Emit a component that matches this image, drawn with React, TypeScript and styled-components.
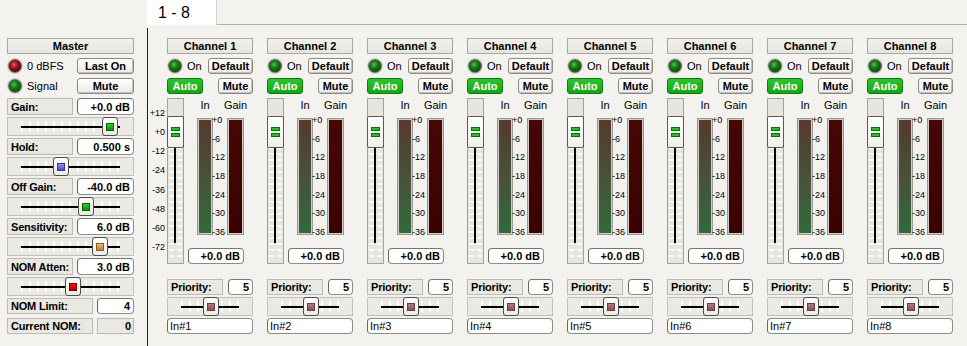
import React from 'react';
import styled, { createGlobalStyle } from 'styled-components';

const Global = createGlobalStyle`
  html, body { margin: 0; padding: 0; background: #f3f2ee; }
  body {
    width: 967px; height: 346px; overflow: hidden;
    font-family: "Liberation Sans", Arial, sans-serif;
    font-size: 11px; color: #000;
  }
  * { box-sizing: border-box; }
`;

const Page = styled.div`
  width: 967px;
  height: 346px;
  display: flex;
  flex-direction: column;
`;

const TabStrip = styled.div`
  display: flex;
  height: 25px;
  flex: none;
`;
const TabSpacer = styled.div`
  width: 147px;
`;
const Tab = styled.div`
  width: 70px;
  background: #fff;
  border-right: 1px solid #d6d4cd;
  font-size: 16px;
  line-height: 25px;
  padding-left: 11px;
`;
const TabRest = styled.div`
  flex: 1;
  border-bottom: 1px solid #b4b2ab;
`;

const Body = styled.div`
  display: flex;
  flex: 1;
`;

const Stack = styled.div<{ $gap: number; $mt?: number }>`
  display: flex;
  flex-direction: column;
  gap: ${p => p.$gap}px;
  margin-top: ${p => p.$mt ?? 0}px;
`;

const MasterPanel = styled(Stack)`
  width: 127px;
  margin: 13px 13px 0 7px;
`;

const HeaderBox = styled.div`
  height: 16px;
  border: 1px solid #aaa79e;
  background: linear-gradient(#f1f0eb, #e6e4de);
  font-weight: bold;
  text-align: center;
  line-height: 14px;
  white-space: nowrap;
`;

const Row = styled.div`
  display: flex;
  align-items: center;
  justify-content: space-between;
  height: 16px;
`;

const ParamRow = styled.div<{ $h?: number }>`
  display: flex;
  justify-content: space-between;
  height: ${p => p.$h ?? 17}px;
`;

const LedGroup = styled.div`
  display: flex;
  align-items: center;
  gap: 5px;
  padding-left: 1px;
  white-space: nowrap;
`;

const Led = styled.div<{ $color: 'green' | 'red' }>`
  width: 14px;
  height: 14px;
  border-radius: 50%;
  border: 1px solid #6f6f6a;
  box-shadow: 0 0 0 1px #cfcdc6;
  background: ${p =>
    p.$color === 'green'
      ? 'radial-gradient(circle at 42% 38%, #4cc24c 0, #157a15 35%, #0b420b 80%)'
      : 'radial-gradient(circle at 42% 38%, #e05a5a 0, #951111 38%, #4c0505 82%)'};
`;

const Button = styled.div<{ $w: number }>`
  width: ${p => p.$w}px;
  height: 16px;
  border: 1px solid #8a8880;
  border-radius: 3px;
  background: linear-gradient(#ffffff, #ebeae5);
  box-shadow: inset -1px -1px 0 #c2c0b8;
  font-weight: bold;
  text-align: center;
  line-height: 14px;
  white-space: nowrap;
`;

const AutoButton = styled.div`
  width: 36px;
  height: 16px;
  border: 1px solid #0e7a0e;
  border-radius: 3px;
  background: linear-gradient(#2cc42c, #16a616);
  color: #fff;
  font-weight: bold;
  text-align: center;
  line-height: 14px;
`;

const LabelBox = styled.div<{ $w: number; $right?: boolean }>`
  width: ${p => p.$w}px;
  height: 100%;
  border: 1px solid #bcb9b0;
  background: #eae8e2;
  font-weight: bold;
  padding: 0 2px 0 3px;
  display: flex;
  align-items: center;
  white-space: nowrap;
  letter-spacing: -0.2px;
  justify-content: ${p => (p.$right ? 'flex-end' : 'flex-start')};
`;

const ValueBox = styled.div<{ $w: number }>`
  width: ${p => p.$w}px;
  height: 100%;
  border: 1px solid #8e8c85;
  border-left-color: #6a6862;
  border-top-color: #77756f;
  border-radius: 4px;
  background: #fff;
  font-weight: bold;
  padding: 0 3px;
  display: flex;
  align-items: center;
  justify-content: flex-end;
  white-space: nowrap;
`;

const NameBox = styled.div`
  height: 16px;
  border: 1px solid #8e8c85;
  border-left-color: #6a6862;
  border-radius: 4px;
  background: #fff;
  padding: 0 2px;
  line-height: 14px;
`;

const SliderBox = styled.div`
  position: relative;
  height: 19px;
  border: 1px solid #c3c0b7;
  background: #ebe9e3;
`;

const SliderTicks = styled.div`
  position: absolute;
  left: 13px;
  right: 13px;
  top: 3px;
  bottom: 3px;
  background: repeating-linear-gradient(90deg, #fbfbf8 0 2px, transparent 2px 8px);
`;

const SliderTrack = styled.div`
  position: absolute;
  left: 13px;
  right: 13px;
  top: 50%;
  height: 2px;
  margin-top: -1px;
  background: #000;
`;

const SliderKnob = styled.div`
  position: absolute;
  top: -1px;
  bottom: -1px;
  width: 16px;
  border: 1px solid #4c4c4a;
  border-radius: 3px;
  background: linear-gradient(#ffffff, #ecebe7);
  display: flex;
  align-items: center;
  justify-content: center;
`;

type DotColor = 'green' | 'blue' | 'tan' | 'red' | 'mauve';
const dotFill: Record<DotColor, [string, string, string]> = {
  green: ['#2ccc2c', '#0a930a', '#086208'],
  blue: ['#9494f4', '#4a4ac4', '#35358c'],
  tan: ['#f2b878', '#c07a38', '#8c5a28'],
  red: ['#f41414', '#b40000', '#720000'],
  mauve: ['#b27a7a', '#8c5252', '#6c4040'],
};

const KnobDot = styled.div<{ $c: DotColor }>`
  width: 8px;
  height: 8px;
  border: 1px solid ${p => dotFill[p.$c][2]};
  background: linear-gradient(${p => dotFill[p.$c][0]}, ${p => dotFill[p.$c][1]});
`;

const HSlider: React.FC<{ knob: number; color: DotColor }> = ({ knob, color }) => (
  <SliderBox>
    <SliderTicks />
    <SliderTrack />
    <SliderKnob style={{ left: knob }}>
      <KnobDot $c={color} />
    </SliderKnob>
  </SliderBox>
);

const Pane = styled.div`
  margin-top: 3px;
  border-left: 1px solid #1e1e1e;
  flex: 1;
  display: flex;
  align-items: flex-start;
  padding-top: 10px;
`;

const FaderScale = styled.div`
  width: 19px;
  padding-right: 2px;
  margin-top: 70px;
  height: 145px;
  display: flex;
  flex-direction: column;
  justify-content: space-between;
  align-items: flex-end;
  font-size: 9px;
  line-height: 11px;
`;

const Channels = styled.div`
  display: flex;
  gap: 14px;
`;

const Channel = styled.div`
  width: 86px;
  display: flex;
  flex-direction: column;
`;

const MeterArea = styled.div`
  display: flex;
  height: 166px;
`;

const FaderSlot = styled.div`
  position: relative;
  width: 17px;
  height: 166px;
  border: 1px solid #a6a39a;
  background: #e7e5df;
`;

const FaderTickCol = styled.div<{ $side: 'left' | 'right' }>`
  position: absolute;
  top: 18px;
  bottom: 2px;
  ${p => p.$side}: 1px;
  width: 5px;
  background: repeating-linear-gradient(180deg, #fbfbf9 0 2px, transparent 2px 6px);
`;

const FaderTrack = styled.div`
  position: absolute;
  left: 6px;
  top: 49px;
  height: 95px;
  width: 2px;
  background: #000;
`;

const FaderKnob = styled.div`
  position: absolute;
  left: -1px;
  right: -1px;
  top: 17px;
  height: 32px;
  border: 1px solid #5a5a58;
  border-radius: 2px;
  background: linear-gradient(#ffffff, #f0efeb);
  display: flex;
  flex-direction: column;
  align-items: center;
  justify-content: center;
  gap: 2px;
`;

const GripBar = styled.div`
  width: 9px;
  height: 4px;
  background: #22c022;
  border: 1px solid #0b700b;
`;

const MeterBlock = styled.div`
  margin-left: 4px;
  width: 56px;
  display: flex;
  flex-direction: column;
`;

const MeterGrid = styled.div<{ $h: number; $mt?: number }>`
  display: grid;
  grid-template-columns: 9px 16px 14px 17px;
  height: ${p => p.$h}px;
  margin-top: ${p => p.$mt ?? 0}px;
`;

const MeterLabel = styled.div<{ $col: number }>`
  grid-column: ${p => p.$col};
  justify-self: center;
  white-space: nowrap;
  line-height: 14px;
`;

const InMeter = styled.div`
  grid-column: 2;
  border: 1px solid #9a978e;
  box-shadow: inset 0 0 0 1px #cfccc4;
  background: linear-gradient(#5a3a2c 0%, #4e4232 18%, #4a4f37 45%, #3c5e3c 75%, #2f6a3b 100%);
`;

const GainMeter = styled.div`
  grid-column: 4;
  border: 1px solid #9a978e;
  box-shadow: inset 0 0 0 1px #cfccc4;
  background: linear-gradient(#480606, #3a0202);
`;

const GainScale = styled.div`
  grid-column: 3;
  margin: -2px 0 -2px -1px;
  display: flex;
  flex-direction: column;
  justify-content: space-between;
  font-size: 9px;
  line-height: 9px;
  white-space: nowrap;
`;

const DbBox = styled(ValueBox)`
  height: 16px;
  margin-top: 13px;
`;

const masterParams: { label: string; value: string; knob: number; color: DotColor }[] = [
  { label: 'Gain:', value: '+0.0 dB', knob: 94, color: 'green' },
  { label: 'Hold:', value: '0.500 s', knob: 45, color: 'blue' },
  { label: 'Off Gain:', value: '-40.0 dB', knob: 70, color: 'green' },
  { label: 'Sensitivity:', value: '6.0 dB', knob: 84, color: 'tan' },
  { label: 'NOM Atten:', value: '3.0 dB', knob: 57, color: 'red' },
];

const faderScale = ['+12', '+0', '-12', '-24', '-36', '-48', '-60', '-72'];
const gainScale = ['+0', '-6', '-12', '-18', '-24', '-30', '-36'];

const ChannelStrip: React.FC<{ n: number }> = ({ n }) => (
  <Channel>
    <Stack $gap={4}>
      <HeaderBox>Channel {n}</HeaderBox>
      <Row>
        <LedGroup>
          <Led $color="green" />
          <span>On</span>
        </LedGroup>
        <Button $w={45}>Default</Button>
      </Row>
      <Row>
        <AutoButton>Auto</AutoButton>
        <Button $w={35}>Mute</Button>
      </Row>
      <MeterArea>
        <FaderSlot>
          <FaderTickCol $side="left" />
          <FaderTickCol $side="right" />
          <FaderTrack />
          <FaderKnob>
            <GripBar />
            <GripBar />
          </FaderKnob>
        </FaderSlot>
        <MeterBlock>
          <MeterGrid $h={14}>
            <MeterLabel $col={2}>In</MeterLabel>
            <MeterLabel $col={4}>Gain</MeterLabel>
          </MeterGrid>
          <MeterGrid $h={117} $mt={6}>
            <InMeter />
            <GainScale>
              {gainScale.map(s => (
                <span key={s}>{s}</span>
              ))}
            </GainScale>
            <GainMeter />
          </MeterGrid>
          <DbBox $w={56}>+0.0 dB</DbBox>
        </MeterBlock>
      </MeterArea>
    </Stack>
    <Stack $gap={2} $mt={15}>
      <ParamRow $h={16}>
        <LabelBox $w={56}>Priority:</LabelBox>
        <ValueBox $w={25}>5</ValueBox>
      </ParamRow>
      <HSlider knob={35} color="mauve" />
      <NameBox>In#{n}</NameBox>
    </Stack>
  </Channel>
);

export default function App() {
  return (
    <>
      <Global />
      <Page>
        <TabStrip>
          <TabSpacer />
          <Tab>1 - 8</Tab>
          <TabRest />
        </TabStrip>
        <Body>
          <MasterPanel $gap={4}>
            <HeaderBox>Master</HeaderBox>
            <Row>
              <LedGroup>
                <Led $color="red" />
                <span>0 dBFS</span>
              </LedGroup>
              <Button $w={57}>Last On</Button>
            </Row>
            <Row>
              <LedGroup>
                <Led $color="green" />
                <span>Signal</span>
              </LedGroup>
              <Button $w={57}>Mute</Button>
            </Row>
            <Stack $gap={2}>
              {masterParams.map(p => (
                <React.Fragment key={p.label}>
                  <ParamRow>
                    <LabelBox $w={66}>{p.label}</LabelBox>
                    <ValueBox $w={57}>{p.value}</ValueBox>
                  </ParamRow>
                  <HSlider knob={p.knob} color={p.color} />
                </React.Fragment>
              ))}
              <ParamRow $h={16}>
                <LabelBox $w={86}>NOM Limit:</LabelBox>
                <ValueBox $w={37}>4</ValueBox>
              </ParamRow>
            </Stack>
            <ParamRow $h={16}>
              <LabelBox $w={86}>Current NOM:</LabelBox>
              <LabelBox $w={37} $right>
                0
              </LabelBox>
            </ParamRow>
          </MasterPanel>
          <Pane>
            <FaderScale>
              {faderScale.map(s => (
                <span key={s}>{s}</span>
              ))}
            </FaderScale>
            <Channels>
              {[1, 2, 3, 4, 5, 6, 7, 8].map(n => (
                <ChannelStrip key={n} n={n} />
              ))}
            </Channels>
          </Pane>
        </Body>
      </Page>
    </>
  );
}
